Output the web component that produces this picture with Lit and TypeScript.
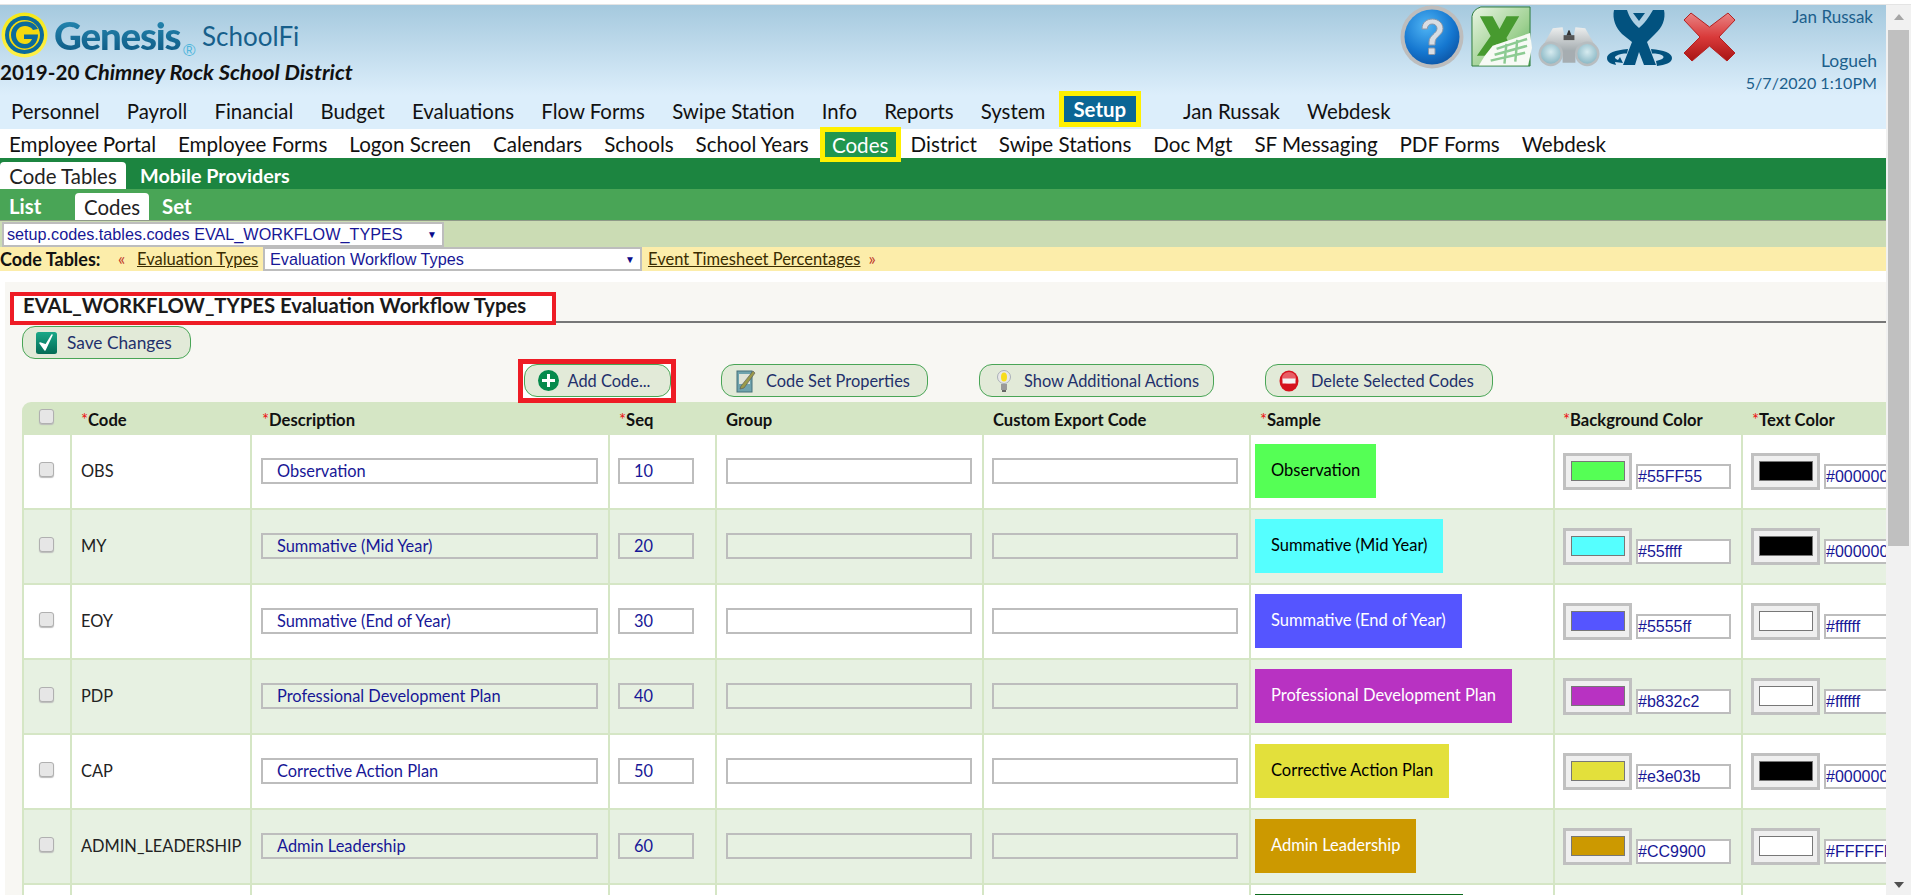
import { LitElement, html, css, svg } from "lit";
import { customElement } from "lit/decorators.js";

const nav1 = ["Personnel","Payroll","Financial","Budget","Evaluations","Flow Forms","Swipe Station","Info","Reports","System"];
const nav2a = ["Employee Portal","Employee Forms","Logon Screen","Calendars","Schools","School Years"];
const nav2b = ["District","Swipe Stations","Doc Mgt","SF Messaging","PDF Forms","Webdesk"];
const rows = [
  ["OBS","Observation","10","#55FF55","#000000","#55FF55","#000"],
  ["MY","Summative (Mid Year)","20","#55ffff","#000000","#55ffff","#000"],
  ["EOY","Summative (End of Year)","30","#5555ff","#ffffff","#5555ff","#fff"],
  ["PDP","Professional Development Plan","40","#b832c2","#ffffff","#b832c2","#fff"],
  ["CAP","Corrective Action Plan","50","#e3e03b","#000000","#e3e03b","#000"],
  ["ADMIN_LEADERSHIP","Admin Leadership","60","#CC9900","#FFFFFF","#CC9900","#fff"],
];

const helpIcon = svg`<svg class="ic" width="64" height="64" viewBox="0 0 64 64">
<defs><radialGradient id="hb" cx=".4" cy=".3" r=".8"><stop offset="0" stop-color="#4fb4f4"/><stop offset=".6" stop-color="#1577d0"/><stop offset="1" stop-color="#0b4f9e"/></radialGradient></defs>
<circle cx="32" cy="32" r="31.5" fill="#bdbdbd"/><circle cx="32" cy="32" r="27.5" fill="url(#hb)"/>
<path d="M22 24c0-7 5-10 10.500-10S43 18 43 23.500c0 7-8 7.500-8 14.500v2h-6v-3c0-7 8-8.500 8-13.500 0-2.500-2-4.500-4.800-4.500-3 0-4.700 2-5 5z" fill="#d9dde3" stroke="#8a97a8" stroke-width="1"/>
<rect x="28.500" y="43" width="6.500" height="6.500" rx="1" fill="#d9dde3" stroke="#8a97a8"/></svg>`;
const excelIcon = svg`<svg class="ic" width="61" height="61" viewBox="0 0 62 61">
<defs><linearGradient id="xg" x1="0" y1="0" x2="1" y2="1"><stop offset="0" stop-color="#e9f5e3"/><stop offset=".6" stop-color="#9fd192"/><stop offset="1" stop-color="#57ac5c"/></linearGradient></defs>
<path d="M10 .5H60V60.500H1V10Q2 3 10 .5z" fill="url(#xg)" stroke="#2c7a3b"/>
<path d="M9 10H22L29 23 36 10H49L36 32 42 44H28L26 38 20 50H6L20 30z" fill="#479a2f"/>
<path d="M22 40 60 27 62 42 58 60H8L14 50z" fill="#f7faf5"/>
<path d="M26 43 57 33M24 49 57 40M20 55 55 47M36 38 34 58M47 34 45 56" stroke="#8ccb92" stroke-width="2.500" fill="none"/></svg>`;
const binoIcon = svg`<svg class="ic" width="62" height="42" viewBox="0 0 63 42">
<defs><linearGradient id="bg" x1="0" y1="0" x2="0" y2="1"><stop offset="0" stop-color="#eceeee"/><stop offset="1" stop-color="#9aa2a6"/></linearGradient><radialGradient id="bl" cx=".5" cy=".4" r=".6"><stop offset="0" stop-color="#d6ebf0"/><stop offset="1" stop-color="#8cb9c6"/></radialGradient></defs>
<path d="M15 3 25 2 27 12H36L38 2 48 3 61 26 36 30H27L2 26z" fill="url(#bg)"/>
<rect x="26" y="10" width="11" height="5" fill="#555"/><path d="M29 10l2-5h1l2 5z" fill="#333"/>
<rect x="25" y="26" width="13" height="12" fill="#a6adb1"/>
<circle cx="13" cy="29" r="12.500" fill="#b7bdc0"/><circle cx="13" cy="29" r="10" fill="url(#bl)"/>
<circle cx="50" cy="29" r="12.500" fill="#b7bdc0"/><circle cx="50" cy="29" r="10" fill="url(#bl)"/></svg>`;
const xIcon = svg`<svg class="ic" width="65" height="57" viewBox="0 0 65 57">
<path d="M7 1L20 1C22 8 27 15 32 19 37 15 42 8 46 1L57 1C59 10 55 19 48 25L40 33 49 56 37 56 32 43 28 56 16 56 25 33 15 25C9 19 5 10 7 1z" fill="#02527f"/>
<path d="M26 4H38L32 12z" fill="#02527f"/>
<path d="M21 40C8 41 0 44 0 49 0 53 4 55 9 56L8 53 16 54 13 48 11 51C8 50 7 48 9 47 12 45 16 44.500 20 44.500z" fill="#02527f"/>
<path d="M44 40C57 41 65 44 65 49 65 54 58 56 50 57L49 52C54 51 58 49 56 47 54 45 49 44.500 45 44.500z" fill="#02527f"/></svg>`;
const redX = svg`<svg class="ic" width="53" height="50" viewBox="0 0 53 50">
<defs><linearGradient id="rx" x1="0" y1="0" x2="0" y2="1"><stop offset="0" stop-color="#e98484"/><stop offset=".5" stop-color="#d93a3a"/><stop offset="1" stop-color="#a81414"/></linearGradient></defs>
<path d="M8 1 26.500 15 45 1 52 8 36 25 52 41 44 49 26.500 34 9 49 1 41 17 25 1 8z" fill="url(#rx)" stroke="#b42020" stroke-linejoin="round"/></svg>`;
const gLogo = svg`<svg width="48" height="46" viewBox="0 0 48 46">
<defs><linearGradient id="gy" x1="0" y1="0" x2="0" y2="1"><stop offset="0" stop-color="#f6e818"/><stop offset="1" stop-color="#fff04a"/></linearGradient></defs>
<ellipse cx="23.500" cy="23" rx="23" ry="22.500" fill="url(#gy)"/>
<ellipse cx="23.500" cy="23" rx="19.500" ry="19" fill="#0c6b9c"/>
<ellipse cx="23.500" cy="23" rx="15.500" ry="15" fill="#f5d90f"/>
<path d="M37 17C34 11 29 9.500 24 9.500 16 9.500 10 15.500 10 23S16 36.500 24 36.500C31 36.500 37 31 37 22.500H23V27H31C30 30 27 32 24 32 18.500 32 15 28 15 23S18.500 14 24 14C27 14 30 15 32 18z" fill="#0c6b9c"/></svg>`;
const checkIcon = svg`<svg width="21" height="22" viewBox="0 0 21 22"><defs><linearGradient id="ck" x1="0" y1="0" x2="0" y2="1"><stop offset="0" stop-color="#19a888"/><stop offset="1" stop-color="#056b55"/></linearGradient></defs><rect width="21" height="22" rx="2.500" fill="url(#ck)"/><path d="M4 11l5 7L16 3l-6 10z" fill="#fff" stroke="#fff" stroke-width="1.500" stroke-linejoin="round"/></svg>`;
const plusIcon = svg`<svg width="21" height="21" viewBox="0 0 21 21"><circle cx="10.500" cy="10.500" r="10.500" fill="#068a4c"/><path d="M10.500 4v13M4 10.500h13" stroke="#fff" stroke-width="3"/></svg>`;
const propIcon = svg`<svg width="20" height="24" viewBox="0 0 20 24"><rect x="1" y="2" width="15" height="21" fill="#6fa3ad" stroke="#47707a"/><rect x="3" y="5" width="11" height="10" fill="#dfe3d8"/><path d="M5 17 17 2l2 2L8 19l-4 1z" fill="#9a9a4a" stroke="#555" stroke-width=".6"/></svg>`;
const bulbIcon = svg`<svg width="14" height="24" viewBox="0 0 14 24"><circle cx="7" cy="8" r="6.500" fill="#e8e8e8" stroke="#a9b0b8"/><ellipse cx="7" cy="8" rx="3" ry="4.500" fill="#f7dd1e"/><rect x="4" y="15" width="6" height="6" fill="#9a9a9a"/><rect x="5" y="21" width="4" height="2" fill="#666"/></svg>`;
const delIcon = svg`<svg width="20" height="22" viewBox="0 0 20 22"><ellipse cx="10" cy="11" rx="9.500" ry="10.500" fill="#d5131e"/><ellipse cx="10" cy="8" rx="7" ry="6" fill="#ef7f83" opacity=".7"/><rect x="3.500" y="8.500" width="13" height="5" fill="#f4f4f4"/></svg>`;

@customElement("app-root")
export class AppRoot extends LitElement {
  static styles = css`
    :host { display: block; width: 1911px; height: 895px; overflow: hidden; background: #fff;
      font-family: "Lato", "Noto Sans", sans-serif; color: #111; }
    .page { display: flex; height: 890px; }
    .topline { height: 5px; background: #fff; border-bottom: 1px solid #e4e4e4; box-sizing: border-box; }
    .main { width: 1886px; overflow: hidden; flex: none; background: #fff; }
    .sb { width: 25px; flex: none; background: #f1f1f1; display: flex; flex-direction: column; align-items: center; }
    .sb .up { width: 0; height: 0; border: 5.500px solid transparent; border-top: 0; border-bottom: 6px solid #a6a6a6; margin-top: 9px; }
    .sb .thumb { width: 21px; height: 516px; background: #c0c0c0; margin-top: 10px; }
    .sb .dn { width: 0; height: 0; border: 5.500px solid transparent; border-bottom: 0; border-top: 6px solid #505050; margin-top: auto; margin-bottom: 7px; }

    .head { height: 90px; background: linear-gradient(#a5c9de, #dceefb); display: flex; justify-content: space-between; }
    .brand { display: flex; flex-direction: column; }
    .logo { display: flex; height: 53px; padding-top: 7px; padding-left: 1px; box-sizing: border-box; }
    .gen { font-size: 38.500px; line-height: 46px; font-weight: 900; letter-spacing: -1.2px; width: 127px; margin-left: 5px; background: linear-gradient(#2a8fb8, #0b5580); -webkit-background-clip: text; background-clip: text; color: transparent; white-space: nowrap; }
    .reg { font-family: "Liberation Sans", sans-serif; font-size: 17px; color: #4fb6dc; align-self: flex-end; margin-bottom: -2px; margin-left: 2px; line-height: 18px; width: 19px; }
    .sf { font-size: 26px; line-height: 34px; margin-top: 7px; color: #175f8b; }
    .dist { font-size: 20.600px; line-height: 24px; font-weight: 700; margin-top: 2px; white-space: nowrap; }
    .dist em { font-size: 21.800px; }
    .icons { display: flex; align-items: flex-start; margin-left: auto; height: 70px; }
    .ic { flex: none; display: block; }
    .icons .i2 { margin: 1px 0 0 7px; } .icons .i3 { margin: 20px 0 0 6px; } .icons .i4 { margin: 4px 0 0 7px; } .icons .i5 { margin: 7px 0 0 11px; }
    .who { width: 150px; flex: none; color: #1c5f8c; text-align: right; padding-right: 9px; box-sizing: border-box; display: flex; flex-direction: column; line-height: 22px; white-space: nowrap; }
    .who .j { padding-right: 4px; margin-top: 1px; height: 44px; font-size: 17px; }
    .who .lg { font-size: 17.500px; }
    .who .dt { font-size: 16.100px; }

    .n1 { height: 34px; background: #dceefb; display: flex; align-items: center; padding: 0 0 3px 11px; box-sizing: border-box; font-size: 20.400px; gap: 27.200px; white-space: nowrap; }
    .box { border: 5px solid #fff000; box-sizing: border-box; display: flex; align-items: center; justify-content: center; color: #fff; position: relative; flex: none; }
    .box.s { width: 82px; height: 36px; margin: -3px 0 0 -13.700px; background: #0b6695; font-weight: 700; }
    .after-setup { margin-left: 15px; }
    .n2 { height: 29px; background: #fff; display: flex; align-items: center; padding-left: 9px; font-size: 20.600px; gap: 21.900px; white-space: nowrap; }
    .box.c { width: 81px; height: 35px; margin: 2px -12px 0 -11px; background: #21964f; }
    .g1 { height: 31px; background: #1c8540; display: flex; align-items: flex-end; font-size: 20.400px; color: #fff; }
    .tab { background: #fff; color: #222; border-radius: 4px 4px 0 0; display: flex; align-items: center; justify-content: center; }
    .g1 .tab { width: 126px; height: 27px; }
    .g1 .t { font-weight: 700; font-size: 19.800px; margin-left: 14px; height: 27px; line-height: 27px; }
    .g2 { height: 32px; box-sizing: border-box; border-bottom: 1px solid #8f9a88; background: #49a556; display: flex; align-items: flex-end; font-size: 20.400px; color: #fff; font-weight: 700; }
    .g2 .tab { width: 74px; height: 27px; margin-right: 13px; font-weight: 400; }
    .g2 .t { height: 27px; line-height: 27px; }
    .g2 .t.l { margin-left: 9px; width: 66px; font-weight: 700; }
    .r1 { height: 26px; background: #cbdcb4; padding: 1px 0 0 2px; box-sizing: border-box; }
    .sel { background: #fff; border: 2px solid #bdbdbd; box-sizing: border-box; display: flex; align-items: center; justify-content: space-between; color: #171796; font-family: "Liberation Sans", sans-serif; font-size: 16.200px; white-space: nowrap; }
    .sel b { font-size: 10px; color: #0a0a8c; font-weight: 400; padding-right: 5px; }
    .r1 .sel { width: 442px; height: 25px; padding-left: 3px; }
    .r2 { height: 24px; background: #fcedaa; display: flex; align-items: center; font-size: 16.500px; white-space: nowrap; }
    .r2 .lbl { font-weight: 700; font-size: 18px; width: 118px; flex: none; }
    .r2 .ar { color: #c0392b; font-size: 17px; width: 19px; line-height: 20px; flex: none; }
    .r2 .ar.e { margin-left: 8px; }
    .r2 u { color: #3a2c00; }
    .r2 .ev { width: 121px; flex: none; }
    .r2 .sel { width: 379px; height: 24px; padding-left: 5px; margin: 0 6px 0 5px; flex: none; }

    .panel { margin: 11px 0 0 5px; background: #f8f7f3; padding-left: 5px; height: 620px; overflow: hidden; }
    .title { display: flex; align-items: flex-end; padding-top: 10px; }
    .title .tb { border: 4px solid #ee1c25; background: #fff; box-sizing: border-box; width: 546px; height: 33px; padding-left: 9px; font-size: 20.300px; line-height: 19px; font-weight: 700; white-space: nowrap; color: #1a1a1a; flex: none; }
    .title .ln { width: 1330px; border-bottom: 2px solid #777; margin-bottom: 2px; flex: none; }
    .btn { height: 33px; border: 1px solid #49a556; border-radius: 13px; background: #e2ead8; display: flex; align-items: center; box-sizing: border-box; color: #22306b; font-size: 16.400px; white-space: nowrap; flex: none; }
    .save { width: 169px; margin: 1px 0 0 12px; padding-left: 13px; gap: 10px; font-size: 17.300px; }
    .acts { display: flex; align-items: center; height: 43px; padding-left: 508px; }
    .redb { border: 5px solid #ee1c25; box-sizing: border-box; width: 158px; height: 44px; display: flex; align-items: flex-start; justify-content: center; background: #fff; flex: none; align-self: flex-start; position: relative; }
    .add { width: 147px; padding-left: 13px; gap: 9px; }
    .a2 { width: 207px; margin-left: 45px; padding-left: 14px; gap: 10px; }
    .a3 { width: 235px; margin-left: 51px; padding-left: 17px; gap: 13px; }
    .a4 { width: 228px; margin-left: 51px; padding-left: 13px; gap: 12px; }

    .tbl { margin-left: 12px; width: 1900px; font-size: 16.400px; }
    .row { display: grid; grid-template-columns: 48px 180px 358px 107px 267px 267px 304px 188px 200px; }
    .th { height: 33px; background: #d5e6c5; border-radius: 9px 0 0 0; font-weight: 700; font-size: 16.600px; align-items: center; }
    .th .c { display: flex; align-items: center; height: 33px; padding-left: 11px; padding-top: 2px; box-sizing: border-box; }
    .th .c.d { padding-left: 12px; }
    .th .c.b { padding-left: 10px; }
    .th i { color: #ee1111; font-style: normal; font-weight: 400; }
    .tr { height: 75px; background: #fff; border-bottom: 2px solid #d5e6c5; box-sizing: border-box; }
    .tr.alt { background: #e7f1e2; }
    .td { border-left: 2px solid #d5e6c5; box-sizing: border-box; display: flex; align-items: flex-start; }
    .cb { width: 15px; height: 15px; border: 1px solid #b0b0b0; border-radius: 3px; background: #e6e6e6; box-sizing: border-box; box-shadow: 0 1px 1px #bbb; flex: none; }
    .th .cb0 { padding-left: 17px; padding-top: 0; padding-bottom: 4px; }
    .td.k { padding: 27px 0 0 15px; }
    .td.code { padding: 26px 0 0 9px; color: #222; line-height: 19px; white-space: nowrap; }
    .inp { border: 2px solid #bdbdbd; box-sizing: border-box; height: 26px; line-height: 21px; color: #171796; margin: 23px 0 0 8px; white-space: nowrap; }
    .desc { width: 337px; padding-left: 14px; margin-left: 9px; }
    .seq { width: 76px; padding-left: 14px; }
    .free { width: 246px; }
    .free.g { margin-left: 9px; }
    .sample { margin: 9px 0 0 4px; height: 54px; display: flex; align-items: center; padding: 0 16px 2px; box-sizing: border-box; white-space: nowrap; font-size: 16.500px; }
    .sample.last { width: 208px; background: #0d6b1e; }
    .colr { display: flex; align-items: flex-start; padding: 18px 0 0 8px; }
    .sw { width: 69px; height: 37px; border: 3px solid #c0c0c0; background: #efefef; box-sizing: border-box; display: flex; align-items: center; justify-content: center; flex: none; }
    .sw span { width: 54px; height: 20px; border: 1px solid #777; box-sizing: border-box; margin-top: -1px; }
    .hex { width: 95px; height: 25px; border: 2px solid #bdbdbd; background: #fff; box-sizing: border-box; color: #171796; margin: 11px 0 0 4px; font-size: 16px; line-height: 22px; overflow: hidden; white-space: nowrap; font-family: "Liberation Sans", sans-serif; flex: none; }
  `;

  render() {
    return html`
    <div class="topline"></div>
    <div class="page">
      <div class="main">
        <div class="head">
          <div class="brand">
            <div class="logo">${gLogo}<div class="gen">Genesis</div><div class="reg">®</div><div class="sf">SchoolFi</div></div>
            <div class="dist">2019-20 <em>Chimney Rock School District</em></div>
          </div>
          <div class="icons">
            <span class="i1">${helpIcon}</span><span class="i2">${excelIcon}</span><span class="i3">${binoIcon}</span><span class="i4">${xIcon}</span><span class="i5">${redX}</span>
          </div>
          <div class="who"><div class="j">Jan Russak</div><div class="lg">Logueh</div><div class="dt">5/7/2020 1:10PM</div></div>
        </div>
        <div class="n1">${nav1.map(n => html`<span>${n}</span>`)}<div class="box s"><span>Setup</span></div><span class="after-setup">Jan Russak</span><span>Webdesk</span></div>
        <div class="n2">${nav2a.map(n => html`<span>${n}</span>`)}<div class="box c"><span>Codes</span></div>${nav2b.map(n => html`<span>${n}</span>`)}</div>
        <div class="g1"><div class="tab">Code Tables</div><div class="t">Mobile Providers</div></div>
        <div class="g2"><div class="t l">List</div><div class="tab">Codes</div><div class="t">Set</div></div>
        <div class="r1"><div class="sel"><span>setup.codes.tables.codes EVAL_WORKFLOW_TYPES</span><b>▼</b></div></div>
        <div class="r2"><span class="lbl">Code Tables:</span><span class="ar">«</span><u class="ev">Evaluation Types</u><div class="sel"><span>Evaluation Workflow Types</span><b>▼</b></div><u>Event Timesheet Percentages</u><span class="ar e">»</span></div>
        <div class="panel">
          <div class="title"><div class="tb">EVAL_WORKFLOW_TYPES Evaluation Workflow Types</div><div class="ln"></div></div>
          <div class="btn save">${checkIcon}<span>Save Changes</span></div>
          <div class="acts">
            <div class="redb"><div class="btn add">${plusIcon}<span>Add Code...</span></div></div>
            <div class="btn a2">${propIcon}<span>Code Set Properties</span></div>
            <div class="btn a3">${bulbIcon}<span>Show Additional Actions</span></div>
            <div class="btn a4">${delIcon}<span>Delete Selected Codes</span></div>
          </div>
          <div class="tbl">
            <div class="row th">
              <div class="c cb0"><div class="cb"></div></div>
              <div class="c"><span><i>*</i>Code</span></div>
              <div class="c d"><span><i>*</i>Description</span></div>
              <div class="c"><span><i>*</i>Seq</span></div>
              <div class="c"><span>Group</span></div>
              <div class="c"><span>Custom Export Code</span></div>
              <div class="c"><span><i>*</i>Sample</span></div>
              <div class="c b"><span><i>*</i>Background Color</span></div>
              <div class="c"><span><i>*</i>Text Color</span></div>
            </div>
            ${rows.map((r, i) => html`
              <div class="row tr ${i % 2 ? "alt" : ""}">
                <div class="td k"><div class="cb"></div></div>
                <div class="td code">${r[0]}</div>
                <div class="td"><div class="inp desc">${r[1]}</div></div>
                <div class="td"><div class="inp seq">${r[2]}</div></div>
                <div class="td"><div class="inp free g"></div></div>
                <div class="td"><div class="inp free"></div></div>
                <div class="td"><div class="sample" style="background:${r[5]};color:${r[6]}">${r[1]}</div></div>
                <div class="td colr"><div class="sw"><span style="background:${r[3]}"></span></div><div class="hex">${r[3]}</div></div>
                <div class="td colr"><div class="sw"><span style="background:${r[4]}"></span></div><div class="hex">${r[4]}</div></div>
              </div>`)}
            <div class="row tr">
              <div class="td"></div><div class="td"></div><div class="td"></div><div class="td"></div><div class="td"></div><div class="td"></div>
              <div class="td"><div class="sample last"></div></div>
              <div class="td"></div><div class="td"></div>
            </div>
          </div>
        </div>
      </div>
      <div class="sb"><div class="up"></div><div class="thumb"></div><div class="dn"></div></div>
    </div>`;
  }
}
